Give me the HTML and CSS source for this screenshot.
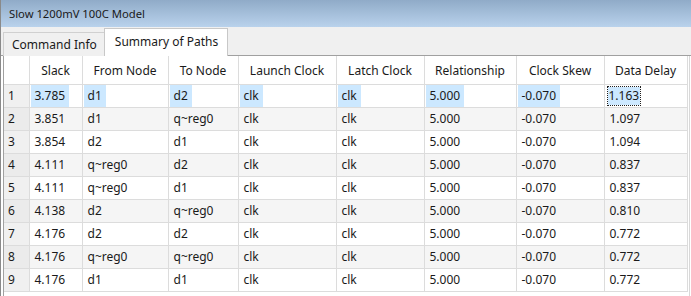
FILE: index.html
```html
<!DOCTYPE html>
<html lang="en">
<head>
    <meta charset="UTF-8">
    <title>Slow 1200mV 100C Model</title>
    <link rel="stylesheet" href="styles.css">
</head>
<body>

    <div class="panel">
        <!-- Title bar -->
        <div class="title-bar">Slow 1200mV 100C Model</div>

        <!-- Tabs -->
        <div class="tabs">
            <div class="tab">Command Info</div>
            <div class="tab active">Summary of Paths</div>
        </div>

        <!-- Path table -->
        <div class="table-wrap">
            <table class="paths">
                <colgroup>
                    <col class="c-num"><col class="c-slack"><col class="c-from"><col class="c-to">
                    <col class="c-launch"><col class="c-latch"><col class="c-rel"><col class="c-skew"><col class="c-delay">
                </colgroup>
                <thead>
                    <tr>
                        <th></th>
                        <th>Slack</th>
                        <th>From Node</th>
                        <th>To Node</th>
                        <th>Launch Clock</th>
                        <th>Latch Clock</th>
                        <th>Relationship</th>
                        <th>Clock Skew</th>
                        <th>Data Delay</th>
                    </tr>
                </thead>
                <tbody>
                    <tr class="selected">
                        <td class="num">1</td>
                        <td><span>3.785</span></td><td><span>d1</span></td><td><span>d2</span></td>
                        <td><span>clk</span></td><td><span>clk</span></td><td><span>5.000</span></td>
                        <td><span>-0.070</span></td><td><span class="focus">1.163</span></td>
                    </tr>
                    <tr>
                        <td class="num">2</td>
                        <td>3.851</td><td>d1</td><td>q~reg0</td><td>clk</td><td>clk</td><td>5.000</td><td>-0.070</td><td>1.097</td>
                    </tr>
                    <tr>
                        <td class="num">3</td>
                        <td>3.854</td><td>d2</td><td>d1</td><td>clk</td><td>clk</td><td>5.000</td><td>-0.070</td><td>1.094</td>
                    </tr>
                    <tr>
                        <td class="num">4</td>
                        <td>4.111</td><td>q~reg0</td><td>d2</td><td>clk</td><td>clk</td><td>5.000</td><td>-0.070</td><td>0.837</td>
                    </tr>
                    <tr>
                        <td class="num">5</td>
                        <td>4.111</td><td>q~reg0</td><td>d1</td><td>clk</td><td>clk</td><td>5.000</td><td>-0.070</td><td>0.837</td>
                    </tr>
                    <tr>
                        <td class="num">6</td>
                        <td>4.138</td><td>d2</td><td>q~reg0</td><td>clk</td><td>clk</td><td>5.000</td><td>-0.070</td><td>0.810</td>
                    </tr>
                    <tr>
                        <td class="num">7</td>
                        <td>4.176</td><td>d2</td><td>d2</td><td>clk</td><td>clk</td><td>5.000</td><td>-0.070</td><td>0.772</td>
                    </tr>
                    <tr>
                        <td class="num">8</td>
                        <td>4.176</td><td>q~reg0</td><td>q~reg0</td><td>clk</td><td>clk</td><td>5.000</td><td>-0.070</td><td>0.772</td>
                    </tr>
                    <tr>
                        <td class="num">9</td>
                        <td>4.176</td><td>d1</td><td>d1</td><td>clk</td><td>clk</td><td>5.000</td><td>-0.070</td><td>0.772</td>
                    </tr>
                </tbody>
            </table>
        </div>
    </div>

</body>
</html>
```

FILE: styles.css
```css
/* Page */
body {
    margin: 0;
    background: #ffffff;
    font-family: "Noto Sans", "Open Sans", sans-serif;
    font-size: 12px;
    color: #1a1a1a;
}

.panel {
    width: 691px;
    height: 296px;
    border-left: 1px solid #8a8a8a;
    box-sizing: border-box;
    overflow: hidden;
}

/* Title bar */
.title-bar {
    height: 27px;
    line-height: 27px;
    padding-left: 8px;
    background: linear-gradient(#90abc8, #b9d2ec);
    font-size: 11.25px;
}

/* Tabs */
.tabs {
    display: flex;
    align-items: flex-end;
    height: 29px;
    padding-left: 2px;
    background: #f0f0f0;
    border-bottom: 1px solid #a0a0a0;
    box-sizing: border-box;
}

.tab {
    height: 23px;
    line-height: 23px;
    padding: 0 7px 0 8px;
    font-size: 12px;
    border: 1px solid #d0d0d0;
    border-bottom: none;
    margin-bottom: -1px;
    background: #f0f0f0;
}

.tab.active {
    height: 27px;
    line-height: 26px;
    background: #ffffff;
    border-color: #c8c8c8;
    padding: 0 9px 0 10px;
    margin-left: -1px;
}

/* Table */
.table-wrap {
    margin-left: 2px;
    margin-right: 1px;
    border-left: 1px solid #a0a0a0;
    border-right: 1px solid #d8d8d8;
    height: 240px;
}

.paths {
    border-collapse: collapse;
    table-layout: fixed;
    font-size: 12px;
}

.c-num { width: 25px; }
.c-slack { width: 53px; }
.c-from { width: 86px; }
.c-to { width: 70px; }
.c-launch { width: 98px; }
.c-latch { width: 88px; }
.c-rel { width: 92px; }
.c-skew { width: 88px; }
.c-delay { width: 83px; }

.paths th {
    height: 28px;
    padding: 0;
    font-weight: normal;
    text-align: center;
    border-right: 1px solid #dcdcdc;
    border-bottom: 1px solid #dcdcdc;
    background: #ffffff;
}

.paths td {
    height: 22px;
    line-height: 22px;
    padding: 0 0 0 5px;
    white-space: nowrap;
    border-right: 1px solid #dcdcdc;
    border-bottom: 1px solid #dcdcdc;
}

.paths tbody tr:nth-child(even) td {
    background: #f5f5f5;
}

.paths td.num {
    padding-left: 4px;
    background: #f0f0f0;
}

.paths tbody tr:nth-child(even) td.num {
    background: #ebebeb;
}

/* Selected row */
.selected td span {
    display: inline-block;
    height: 22px;
    line-height: 22px;
    margin-left: -4px;
    padding: 0 4px;
    background: #cce8ff;
    vertical-align: top;
}

.selected td span.focus {
    height: 18px;
    line-height: 18px;
    margin-top: 2px;
    padding: 0 1px;
    margin-left: -2px;
    outline: 1px dotted #202020;
}
```
